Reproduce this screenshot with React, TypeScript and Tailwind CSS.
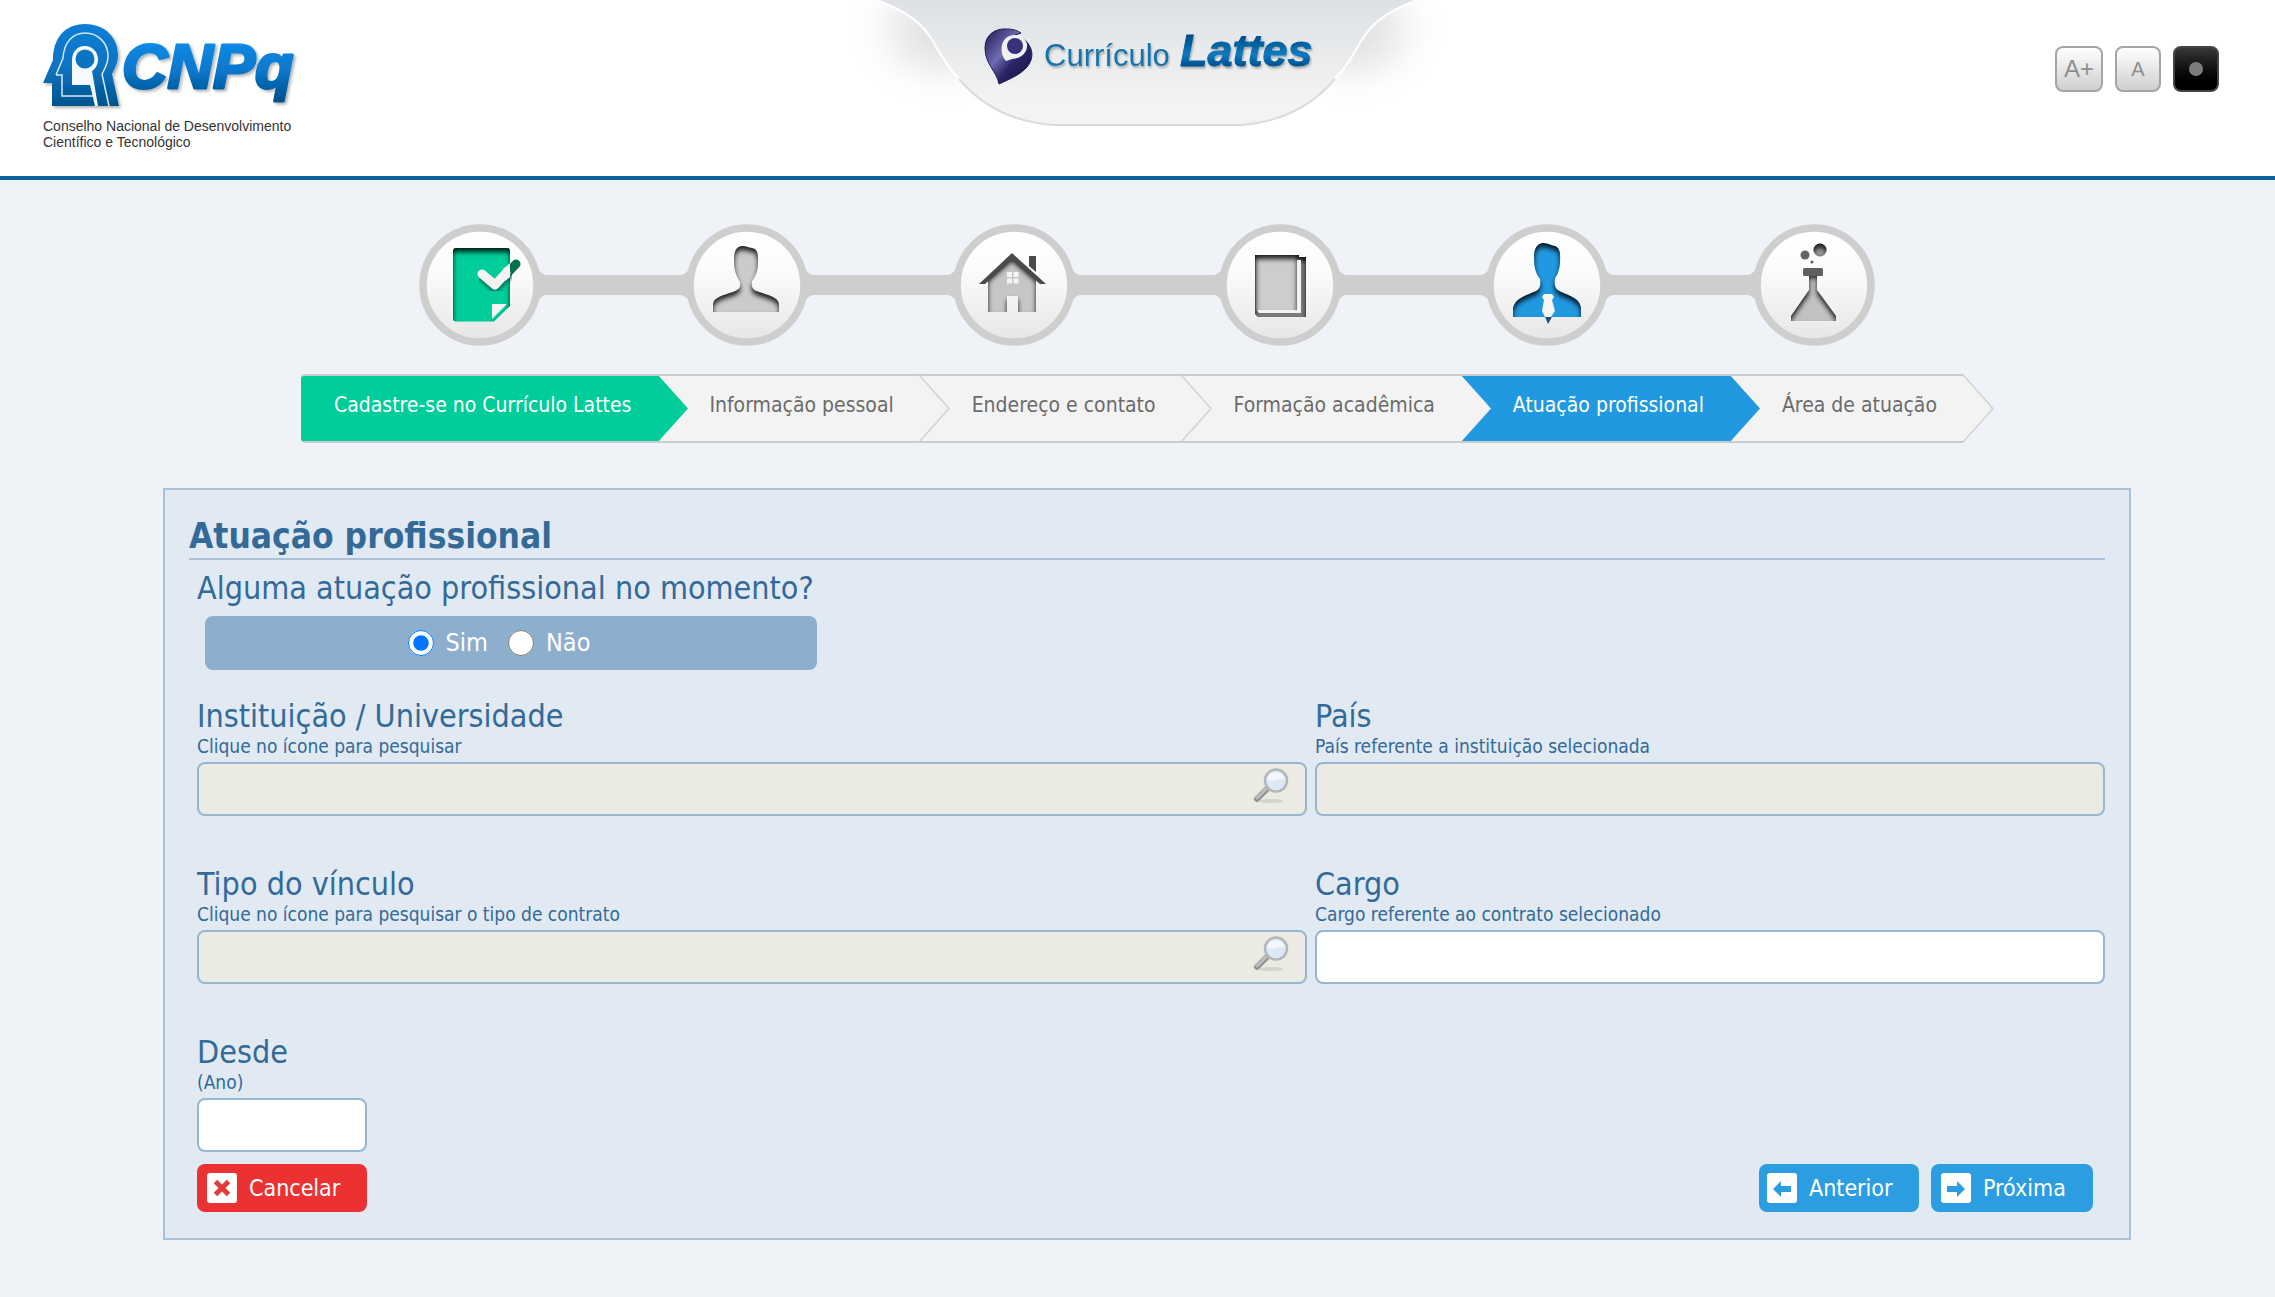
import { useState } from "react";
import type { ReactNode } from "react";

const steps = [
    { label: "Cadastre-se no Currículo Lattes", state: "done" },
    { label: "Informação pessoal", state: "todo" },
    { label: "Endereço e contato", state: "todo" },
    { label: "Formação acadêmica", state: "todo" },
    { label: "Atuação profissional", state: "current" },
    { label: "Área de atuação", state: "todo" },
];

const fills: Record<string, string> = {
    done: "#00cd99",
    current: "#2199e1",
    todo: "#f3f3f3",
};

const stepClasses: Record<string, string> = {
    done: "bg-[#00cd99] text-white",
    current: "bg-[#2199e1] text-white",
    todo: "bg-[#f3f3f3] text-[#6b6b6b]",
};

const BODY = "M27 88 V80 C28 73 38 71 47 68 C53 66 55 64 54 58 C50 52 48 46 48 36 C48 27 50 23 56 22 C58 21.5 62 23 66 24 C71 25 72.5 29 72 38 C72 46 70 52 66 57 C65 64 67 66 73 68 C82 71 92 73 93 80 V88 Z";

const stepIcons: ReactNode[] = [
    <>
        <path d="M76 62 L97 40" stroke="#04704f" strokeWidth="9" strokeLinecap="round" />
        <path filter="url(#inset)" fill="#00cd99" d="M37 24 H88 Q91 24 91 27 V82 L75 97.5 H37 Q34 97.5 34 94 V27 Q34 24 37 24 Z" />
        <path d="M63 53 L76 65 L90 51" fill="none" stroke="#00634a" strokeWidth="9" strokeLinecap="round" opacity=".7" filter="url(#soft)" />
        <path d="M63 50 L76 61 L87 49" fill="none" stroke="#f3f3f3" strokeWidth="9" strokeLinecap="round" strokeLinejoin="round" />
        <path d="M84 45 L91 39 V53 L86 57 Z" fill="#f3f3f3" />
        <path d="M73 80 H88 L73 95 Z" fill="#f3f3f3" />
    </>,
    <path filter="url(#inset)" fill="#cbcbcb" d={BODY} />,
    <>
        <path filter="url(#inset)" fill="#c6c6c6" d="M35 54 L59 33 L83 54 V88 H65 V72 H54 V88 H35 Z" />
        <path fill="#4a4a4a" d="M76 32 H83 V48 L76 42 Z" />
        <path d="M26 60 L59 29 L93 60 H87 L59 36 L32 60 Z" fill="#4a4a4a" />
        <path fill="#f5f5f5" d="M54 48h5v5h-5z M60.500 48h5v5h-5z M54 54.500h5v5h-5z M60.500 54.500h5v5h-5z" />
    </>,
    <>
        <path filter="url(#inset)" fill="#7b7b7b" d="M36 31 H80 V33 H87 V93 H39 L36 90 Z" />
        <path fill="#f3f3f3" d="M78 36 H82 V89 H40 L38 86 H78 Z" />
        <path filter="url(#inset)" fill="#cdcdcd" d="M37 31 H78 V86 H37 Z" />
    </>,
    <>
        <path
            filter="url(#inset)"
            fill="#2199e1"
            d="M27 93 V84 C29 75 38 72 48 68 C54 66 55 62 54 55 C50 50 48 44 48 33 C48 24 51 20 57 19 C62 19 66 22 69 22 C74 24 74.500 30 74 36 C74 44 72 50 69 54 C68 62 69 65 75 68 C85 72 94 75 95 84 V93 Z"
        />
        <path fill="#f5f5f5" d="M58 70 H66 L68 73 L66 76 L69 87 L65 93 H59 L56 87 L58 76 L56 73 Z" />
        <path fill="#1d4f77" d="M59 93 H66 L62 100 Z" />
    </>,
    <>
        <circle filter="url(#inset)" cx="67" cy="26" r="6.500" fill="#9c9c9c" />
        <circle cx="52" cy="31" r="4.500" fill="#666" />
        <circle cx="59" cy="38" r="1.600" fill="#666" />
        <path filter="url(#inset)" fill="#c2c2c2" d="M56 50 H64 V66 L83 92 V97 H38 V92 L56 66 Z" />
        <rect x="50" y="44" width="20" height="8" rx="1.500" fill="#5f5f5f" />
    </>,
];

function SvgDefs() {
    return (
        <svg className="absolute h-0 w-0" aria-hidden="true">
            <defs>
                <linearGradient id="disc" x1="0" y1="0" x2="0" y2="1">
                    <stop offset="0" stopColor="#ffffff" />
                    <stop offset=".35" stopColor="#fcfcfc" />
                    <stop offset="1" stopColor="#e6e6e6" />
                </linearGradient>
                <filter id="soft">
                    <feGaussianBlur stdDeviation="1.500" />
                </filter>
                <filter id="inset" colorInterpolationFilters="sRGB">
                    <feOffset dx="0" dy="4" />
                    <feGaussianBlur stdDeviation="2.500" result="blur" />
                    <feComposite operator="out" in="SourceGraphic" in2="blur" result="inverse" />
                    <feFlood floodColor="#000" floodOpacity=".85" />
                    <feComposite operator="in" in2="inverse" result="shadow" />
                    <feComposite operator="over" in="shadow" in2="SourceGraphic" />
                </filter>
            </defs>
        </svg>
    );
}

function CnpqLogo() {
    return (
        <svg viewBox="0 0 256 88" className="h-[88px] w-[256px]" role="img" aria-label="CNPq">
            <defs>
                <linearGradient id="cnpqHead" gradientUnits="userSpaceOnUse" x1="0" y1="0" x2="0" y2="84">
                    <stop offset="0" stopColor="#0a7ed6" />
                    <stop offset=".5" stopColor="#0a74c2" />
                    <stop offset="1" stopColor="#02528c" />
                </linearGradient>
                <linearGradient id="cnpqText" gradientUnits="userSpaceOnUse" x1="0" y1="18" x2="0" y2="76">
                    <stop offset="0" stopColor="#078ae6" />
                    <stop offset=".5" stopColor="#0877cb" />
                    <stop offset="1" stopColor="#02528c" />
                </linearGradient>
                <filter id="logoShadow" x="-10%" y="-10%" width="120%" height="130%">
                    <feDropShadow dx="2" dy="2" stdDeviation="1.500" floodColor="#000" floodOpacity=".3" />
                </filter>
            </defs>
            <g filter="url(#logoShadow)">
                <path
                    fill="url(#cnpqHead)"
                    d="M9 82 V59 H0 L10 36 C10 14 22 0 42 0 C62 0 75 14 75 31 C75 39 72 44 69 50 L76 82 Z"
                />
                <text
                    x="79"
                    y="64"
                    fontFamily="Liberation Sans, Arial, sans-serif"
                    fontSize="63"
                    fontWeight="700"
                    fontStyle="italic"
                    fill="url(#cnpqText)"
                    stroke="url(#cnpqText)"
                    strokeWidth="3"
                    strokeLinejoin="round"
                >
                    CNPq
                </text>
            </g>
            <g fill="none" stroke="#d4e8f7" strokeWidth="1.500">
                <path d="M13 51 L20 34 C21 18 30 9 42 9 C55 9 65 19 65 32 C65 40 62 44 59 50 L66 82" />
                <path d="M13 51 H19 V72 H51" />
            </g>
            <path fill="#f6fafd" d="M42 22 C49 22 55 28 55 35 C55 41 52 45 49 47 L55 82 H52 L47 61 H29 V37 C29 28 34 22 42 22 Z" />
            <circle cx="42" cy="35" r="9.500" fill="#0a74c2" />
        </svg>
    );
}

function LattesLogo() {
    return (
        <svg viewBox="0 0 600 134" className="h-[134px] w-[600px]" role="img" aria-label="Currículo Lattes">
            <defs>
                <linearGradient id="tab" x1="0" y1="0" x2="0" y2="1">
                    <stop offset="0" stopColor="#dde1e5" />
                    <stop offset=".8" stopColor="#f3f3f3" />
                    <stop offset="1" stopColor="#f3f3f3" />
                </linearGradient>
                <radialGradient id="wing">
                    <stop offset="0" stopColor="#dcdcdc" />
                    <stop offset=".5" stopColor="#f0f0f0" />
                    <stop offset="1" stopColor="#fff" stopOpacity="0" />
                </radialGradient>
                <linearGradient id="lattes" gradientUnits="userSpaceOnUse" x1="0" y1="34" x2="0" y2="68">
                    <stop offset="0" stopColor="#004a82" />
                    <stop offset=".6" stopColor="#0a7abf" />
                    <stop offset="1" stopColor="#004a82" />
                </linearGradient>
                <linearGradient id="mark" x1="0" y1="0" x2="1" y2="1">
                    <stop offset="0" stopColor="#1c1650" />
                    <stop offset=".4" stopColor="#6f6cb4" />
                    <stop offset=".6" stopColor="#2c2568" />
                    <stop offset="1" stopColor="#150f3d" />
                </linearGradient>
                <filter id="textShadow" x="-5%" y="-5%" width="110%" height="130%">
                    <feDropShadow dx="1" dy="2" stdDeviation="1" floodColor="#000" floodOpacity=".3" />
                </filter>
            </defs>
            <ellipse cx="96" cy="30" rx="96" ry="78" fill="url(#wing)" />
            <ellipse cx="504" cy="30" rx="96" ry="78" fill="url(#wing)" />
            <path
                fill="url(#tab)"
                d="M30 0 C62 12 76 24 87 43 C97 60 101 67 112 79 C134 105 166 122 206 125 H394 C434 122 466 105 488 79 C499 67 503 60 513 43 C524 24 538 12 570 0 Z"
            />
            <path
                fill="none"
                stroke="#fff"
                strokeWidth="2"
                d="M30 0 C62 12 76 24 87 43 C97 60 101 67 112 79 M488 79 C499 67 503 60 513 43 C524 24 538 12 570 0"
            />
            <path
                fill="none"
                stroke="#d9dbdc"
                strokeWidth="2"
                d="M112 79 C134 105 166 122 206 125 H394 C434 122 466 105 488 79"
            />
            {/* head mark */}
            <path
                fill="url(#mark)"
                stroke="#231c52"
                d="M152 84 C150 72 138 64 138 48 C138 34 149 28 160 29 C167 29 171 31 174 33 L168 35 L178 40 C185 47 186 54 184 60 C180 72 165 78 152 84 Z"
            />
            <path fill="#f0f1f3" d="M159 61 C153 55 153 43 159 38 C166 32 178 35 180 44 C181 53 173 59 165 59 Z" />
            <circle cx="168" cy="46" r="8" fill="#393180" />
            <g fontFamily="Liberation Sans, Arial, sans-serif" filter="url(#textShadow)">
                <text x="197" y="66" fontSize="31" fill="#1673ab">
                    Currículo
                </text>
                <text x="333" y="66" fontSize="45" fontWeight="700" fontStyle="italic" fill="url(#lattes)" stroke="url(#lattes)">
                    Lattes
                </text>
            </g>
        </svg>
    );
}

function SearchIcon() {
    return (
        <svg viewBox="0 0 36 36" className="h-9 w-9" aria-hidden="true">
            <ellipse cx="18" cy="33" rx="12" ry="2" fill="#000" opacity=".1" />
            <path d="M13 22 L4 31" stroke="#929292" strokeWidth="6" strokeLinecap="round" />
            <path d="M13 21 L4 30" stroke="#bdbdbd" strokeWidth="3" strokeLinecap="round" />
            <circle cx="23" cy="12.500" r="11" fill="#dbe8f6" stroke="#b3b6b9" strokeWidth="2.500" />
            <path d="M14 12 C15 2 31 2 32 12 C26 9 20 15 14 12 Z" fill="#f1f7fd" />
        </svg>
    );
}

function StepCircle({ index }: { index: number }) {
    return (
        <svg viewBox="0 0 122 122" className="h-[122px] w-[122px] shrink-0 overflow-visible" aria-hidden="true">
            {index > 0 && <path fill="#cecece" d="M-5 51 Q2 50 8 36 V86 Q2 72 -5 71 Z" />}
            {index < steps.length - 1 && <path fill="#cecece" d="M127 51 Q120 50 114 36 V86 Q120 72 127 71 Z" />}
            <circle cx="61" cy="61" r="57" fill="url(#disc)" stroke="#cecece" strokeWidth="7.500" />
            {stepIcons[index]}
        </svg>
    );
}

function StepArrow({ from, to }: { from: string; to?: string }) {
    return (
        <svg viewBox="0 0 31 69" className="h-[69px] w-[31px] shrink-0" aria-hidden="true">
            {to && <path d="M0 0 H31 V69 H0 Z" fill={fills[to]} />}
            <path d="M0 0 L31 34.500 L0 69 Z" fill={fills[from]} />
            {to && <path d="M0 1 H31 M0 68 H31" stroke="#c9cbce" strokeWidth="2" />}
            <path d="M0 1 L30 34.500 L0 68" fill="none" stroke={from === "todo" && to !== "current" ? "#cfd1d3" : "none"} strokeWidth="1.500" />
        </svg>
    );
}

type FieldProps = {
    id: string;
    label: string;
    hint: string;
    readOnly?: boolean;
    search?: boolean;
};

function Field({ id, label, hint, readOnly, search }: FieldProps) {
    return (
        <div>
            <label htmlFor={id} className="block text-[#336a97]">
                <span className="block text-[32px] leading-9">{label}</span>
                <span className="block text-[19px] leading-6">{hint}</span>
            </label>
            <div className="relative mt-1">
                <input
                    id={id}
                    type="text"
                    readOnly={readOnly}
                    className={
                        "block h-[54px] w-full rounded-lg border-2 border-[#98b5d1] px-3 text-2xl text-[#336a97] outline-none " +
                        (readOnly ? "bg-[#ebebe4]" : "bg-white")
                    }
                />
                {search && (
                    <button type="button" aria-label={"Pesquisar " + label} className="absolute top-1.5 right-[18px] cursor-pointer">
                        <SearchIcon />
                    </button>
                )}
            </div>
        </div>
    );
}

const toolButton = "flex h-[46px] items-center justify-center rounded-lg border-2 cursor-pointer";
const navButton = "flex h-12 items-center gap-3 rounded-lg text-[23px] text-white cursor-pointer";

export default function App() {
    const [active, setActive] = useState("sim");

    return (
        <div className="min-h-screen bg-[#eff3f8] font-['DejaVu_Sans_Condensed','DejaVu_Sans',sans-serif]">
            <SvgDefs />

            {/* Header */}
            <header className="grid h-[180px] grid-cols-[1fr_auto_1fr] items-start border-b-4 border-[#0b639c] bg-white pl-[43px] pr-6">
                <a href="#" className="justify-self-start pt-6">
                    <CnpqLogo />
                    <p className="mt-1.5 font-['Liberation_Sans',sans-serif] text-sm leading-4 whitespace-nowrap text-[#333]">
                        Conselho Nacional de Desenvolvimento
                        <br />
                        Científico e Tecnológico
                    </p>
                </a>

                <LattesLogo />

                <div className="flex gap-3 justify-self-end pt-[46px] pr-8 font-['Liberation_Sans',sans-serif] text-[#8e8e8e]">
                    <button type="button" className={toolButton + " w-12 border-[#a5a5a5] bg-linear-to-b from-white to-[#cfcfcf] text-2xl"}>
                        A+
                    </button>
                    <button type="button" className={toolButton + " w-[46px] border-[#a5a5a5] bg-linear-to-b from-white to-[#cfcfcf] text-xl"}>
                        A
                    </button>
                    <button
                        type="button"
                        aria-label="Alto contraste"
                        className={toolButton + " w-[46px] border-[#444] bg-linear-to-b from-[#383838] to-black"}
                    >
                        <span className="h-3.5 w-3.5 rounded-full bg-[#7d7d7d]" />
                    </button>
                </div>
            </header>

            <main className="pt-11 pr-36 pb-14 pl-[163px]">
                {/* Progress */}
                <div className="mx-auto flex max-w-[1456px] items-center">
                    {steps.map((step, i) => (
                        <div key={step.label} className={i > 0 ? "flex flex-1 items-center" : "flex items-center"}>
                            {i > 0 && <div className="h-5 flex-1 bg-[#cecece]" />}
                            <StepCircle index={i} />
                        </div>
                    ))}
                </div>

                <nav className="mx-auto mt-7 max-w-[1693px]">
                    <ol className="flex text-[21px]">
                        {steps.map((step, i) => (
                            <li key={step.label} className="flex flex-auto">
                                <a
                                    href="#"
                                    className={
                                        "flex flex-1 items-center justify-center border-y-2 border-[#c9cbce] pb-1.5 whitespace-nowrap " +
                                        (i === 0 ? "rounded-l-sm pr-6 pl-8 " : "pr-6 pl-5 ") +
                                        stepClasses[step.state]
                                    }
                                >
                                    {step.label}
                                </a>
                                <StepArrow from={step.state} to={steps[i + 1]?.state} />
                            </li>
                        ))}
                    </ol>
                </nav>

                {/* Form */}
                <form className="mt-[45px] border-2 border-[#aac1da] bg-[#e1e9f3] px-6 pt-6 pb-[26px]" onSubmit={(e) => e.preventDefault()}>
                    <h1 className="border-b-2 border-[#aac1da] text-[35px] leading-11 font-bold text-[#336a97]">Atuação profissional</h1>

                    <div className="pl-2">
                        <fieldset className="w-[620px] pt-2">
                            <legend className="float-left text-[32px] leading-10 whitespace-nowrap text-[#336a97]">
                                Alguma atuação profissional no momento?
                            </legend>
                            <div className="clear-both pt-2 pl-2">
                                <div className="flex h-[54px] items-center justify-center gap-5 rounded-lg bg-[#8eaecd] pr-6 text-[25px] text-white">
                                    <label className="flex items-center gap-3">
                                        <input
                                            type="radio"
                                            name="atuacao"
                                            className="h-[26px] w-[26px]"
                                            checked={active === "sim"}
                                            onChange={() => setActive("sim")}
                                        />
                                        Sim
                                    </label>
                                    <label className="flex items-center gap-3">
                                        <input
                                            type="radio"
                                            name="atuacao"
                                            className="h-[26px] w-[26px]"
                                            checked={active === "nao"}
                                            onChange={() => setActive("nao")}
                                        />
                                        Não
                                    </label>
                                </div>
                            </div>
                        </fieldset>

                        <div className="mt-7 grid grid-cols-[1110fr_790fr] gap-x-2 gap-y-[50px]">
                            <Field id="instituicao" label="Instituição / Universidade" hint="Clique no ícone para pesquisar" readOnly search />
                            <Field id="pais" label="País" hint="País referente a instituição selecionada" readOnly />
                            <Field id="vinculo" label="Tipo do vínculo" hint="Clique no ícone para pesquisar o tipo de contrato" readOnly search />
                            <Field id="cargo" label="Cargo" hint="Cargo referente ao contrato selecionado" />
                            <div className="w-[170px]">
                                <Field id="desde" label="Desde" hint="(Ano)" />
                            </div>
                        </div>

                        <div className="mt-3 flex items-center justify-between pr-3">
                            <button type="button" className={navButton + " w-[170px] bg-[#eb3132] pl-[10px]"}>
                                <svg viewBox="0 0 30 30" className="h-[30px] w-[30px]" aria-hidden="true">
                                    <rect width="30" height="30" rx="3" fill="#fff" />
                                    <path d="M8.500 8.500 L21.500 21.500 M21.500 8.500 L8.500 21.500" stroke="#e23b3c" strokeWidth="5" />
                                </svg>
                                Cancelar
                            </button>
                            <div className="flex gap-3">
                                <button type="button" className={navButton + " w-40 bg-[#2c9de1] pl-2"}>
                                    <svg viewBox="0 0 30 30" className="h-[30px] w-[30px]" aria-hidden="true">
                                        <rect width="30" height="30" rx="3" fill="#fff" />
                                        <path d="M6 16 L14 8 V13 H24 V19 H14 V24 Z" fill="#2c9de1" />
                                    </svg>
                                    Anterior
                                </button>
                                <button type="submit" className={navButton + " w-[162px] bg-[#2c9de1] pl-[10px]"}>
                                    <svg viewBox="0 0 30 30" className="h-[30px] w-[30px]" aria-hidden="true">
                                        <rect width="30" height="30" rx="3" fill="#fff" />
                                        <path d="M24 16 L16 8 V13 H6 V19 H16 V24 Z" fill="#2c9de1" />
                                    </svg>
                                    Próxima
                                </button>
                            </div>
                        </div>
                    </div>
                </form>
            </main>
        </div>
    );
}
